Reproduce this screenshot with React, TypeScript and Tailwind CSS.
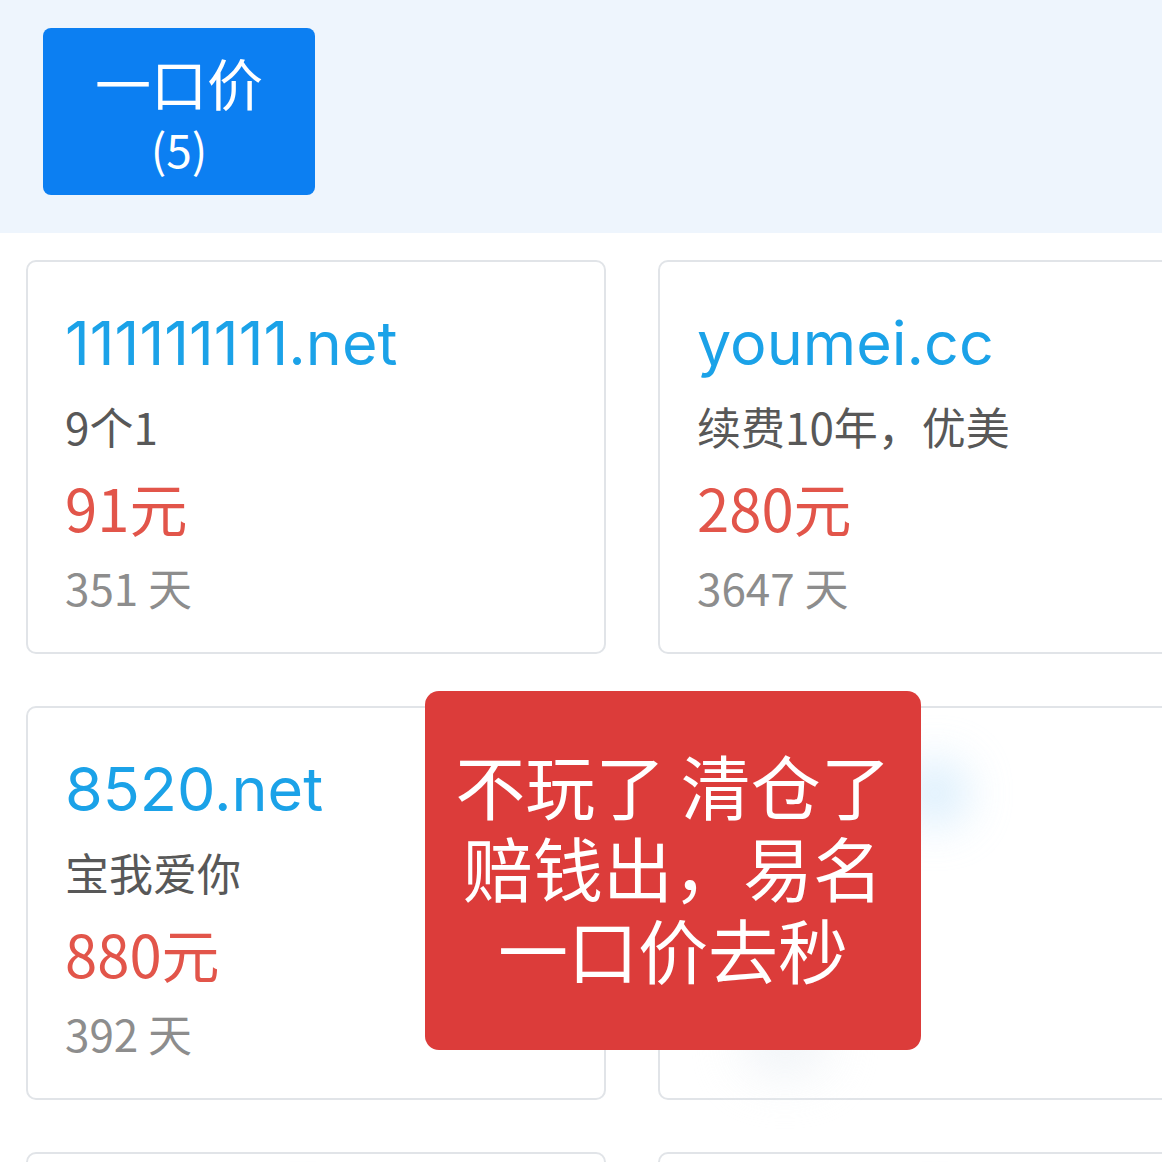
const DOMAINS = [
  { name: '111111111.net', note: '9个1', price: '91元', days: '351 天' },
  { name: 'youmei.cc', note: '续费10年，优美', price: '280元', days: '3647 天' },
  { name: '8520.net', note: '宝我爱你', price: '880元', days: '392 天' },
  { name: '', note: '', price: '', days: '' },
  { name: '', note: '', price: '', days: '' },
  { name: '', note: '', price: '', days: '' },
];

function DomainCard({ item }: { item: (typeof DOMAINS)[number] }) {
  const empty = !item.name;
  return (
    <div className="relative h-[394px] rounded-[10px] border-2 border-[#e1e4e8] bg-white pl-[37px] pt-[38px]">
      {!empty && (
        <>
          <div className="h-[86px] text-[61px] leading-[86px] text-[#1ba2e8]" style={{ fontFamily: 'Inter, "Noto Sans CJK SC", sans-serif' }}>
            {item.name}
          </div>
          <div className="h-[80px] text-[44px] leading-[80px] text-[#585858]">{item.note}</div>
          <div className="h-[82px] text-[58px] leading-[82px] text-[#e2554a]">{item.price}</div>
          <div className="h-[78px] text-[44px] leading-[78px] text-[#8d8d8d]">{item.days}</div>
        </>
      )}
      {empty && (
        <>
          <div className="absolute left-[245px] top-[55px] h-[60px] w-[60px] rounded-full bg-[#bfe2fb] opacity-70 blur-xl" />
          <div className="absolute left-[80px] top-[300px] h-[70px] w-[90px] rounded-full bg-[#eef2f6] opacity-80 blur-xl" />
        </>
      )}
    </div>
  );
}

export default function App() {
  return (
    <div
      className="relative h-[1162px] w-[1162px] overflow-hidden bg-white"
      style={{ fontFamily: '"Noto Sans CJK SC", "Noto Sans", sans-serif' }}
    >
      {/* tab strip */}
      <div className="h-[233px] bg-[#eef5fd] pl-[43px] pt-[28px]">
        <button className="flex h-[167px] w-[272px] flex-col items-center justify-center rounded-[8px] bg-[#0c7ff2] text-white">
          <span className="block text-[56px] leading-[68px]">一口价</span>
          <span className="mt-[4px] block text-[46px] leading-[56px]">(5)</span>
        </button>
      </div>

      {/* domain cards */}
      <div className="grid w-[1238px] grid-cols-[580px_580px] gap-[52px] pl-[26px] pt-[27px]">
        {DOMAINS.map((d, i) => (
          <DomainCard key={i} item={d} />
        ))}
      </div>

      {/* sale banner */}
      <div className="absolute left-[425px] top-[691px] flex h-[359px] w-[496px] flex-col items-center justify-center rounded-[14px] bg-[#dc3c3a] pb-[8px] text-[70px] leading-[82px] text-white">
        <span className="block">不玩了&nbsp;清仓了</span>
        <span className="block">赔钱出，易名</span>
        <span className="block">一口价去秒</span>
      </div>
    </div>
  );
}
